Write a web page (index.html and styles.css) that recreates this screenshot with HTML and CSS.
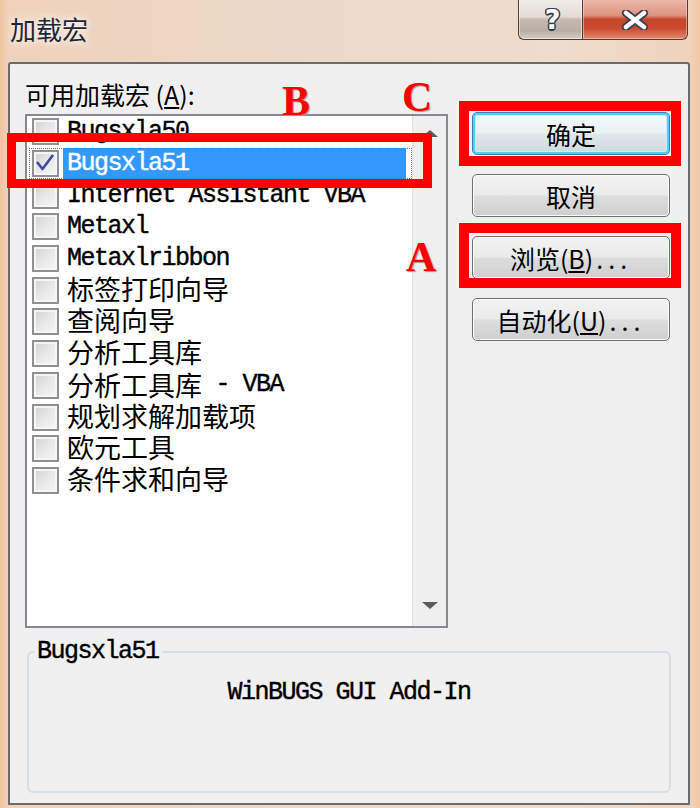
FILE: index.html
```html
<!DOCTYPE html>
<html lang="zh-CN">
<head>
    <meta charset="UTF-8">
    <meta name="viewport" content="width=device-width, initial-scale=1.0">
    <title>加载宏</title>
    <link rel="stylesheet" href="styles.css">
</head>
<body>
    <div class="window">
        <div class="titlebar">
            <span class="title">加载宏</span>
            <div class="caption">
                <div class="cap-btn help"><span class="help-glyph">?</span></div>
                <div class="cap-btn close">
                    <svg width="28" height="20" viewBox="0 0 28 20">
                        <path d="M5 3 L23 17 M23 3 L5 17" stroke="#3a3f52" stroke-width="8" stroke-linecap="round"/>
                        <path d="M5 3 L23 17 M23 3 L5 17" stroke="#ffffff" stroke-width="4.5" stroke-linecap="round"/>
                    </svg>
                </div>
            </div>
        </div>

        <div class="client">
            <div class="top">
                <div class="list-col">
                    <div class="list-label">可用加载宏 (<u>A</u>):</div>
                    <div class="listbox">
                        <div class="items">
                            <div class="item"><span class="box"></span><span class="name">Bugsxla50</span></div>
                            <div class="item selected">
                                <span class="box">
                                    <svg width="23" height="23" viewBox="0 0 23 23">
                                        <path d="M3 10 L8.5 17 L19 3" fill="none" stroke="#3d4c9e" stroke-width="2.6" stroke-linejoin="round"/>
                                    </svg>
                                </span>
                                <span class="name">Bugsxla51</span>
                            </div>
                            <div class="item"><span class="box"></span><span class="name">Internet Assistant VBA</span></div>
                            <div class="item"><span class="box"></span><span class="name">Metaxl</span></div>
                            <div class="item"><span class="box"></span><span class="name">Metaxlribbon</span></div>
                            <div class="item"><span class="box"></span><span class="name zh">标签打印向导</span></div>
                            <div class="item"><span class="box"></span><span class="name zh">查阅向导</span></div>
                            <div class="item"><span class="box"></span><span class="name zh">分析工具库</span></div>
                            <div class="item"><span class="box"></span><span class="name mixed"><span class="zh">分析工具库</span> - VBA</span></div>
                            <div class="item"><span class="box"></span><span class="name zh">规划求解加载项</span></div>
                            <div class="item"><span class="box"></span><span class="name zh">欧元工具</span></div>
                            <div class="item"><span class="box"></span><span class="name zh">条件求和向导</span></div>
                        </div>
                        <div class="scrollbar">
                            <span class="arrow up"></span>
                            <span class="arrow down"></span>
                        </div>
                    </div>
                </div>

                <div class="buttons">
                    <button class="default">确定</button>
                    <button>取消</button>
                    <button>浏览(<u>B</u>)<span class="dots">...</span></button>
                    <button>自动化(<u>U</u>)<span class="dots">...</span></button>
                </div>
            </div>

            <fieldset class="desc">
                <legend>Bugsxla51</legend>
                <p>WinBUGS GUI Add-In</p>
            </fieldset>
        </div>

        <!-- red annotation marks drawn over the dialog -->
        <div class="mark mark-b"></div>
        <div class="mark mark-c"></div>
        <div class="mark mark-a"></div>
        <span class="letter letter-b">B</span>
        <span class="letter letter-c">C</span>
        <span class="letter letter-a">A</span>
    </div>
</body>
</html>
```

FILE: styles.css
```css
* {
    box-sizing: border-box;
}

body {
    margin: 0;
    width: 700px;
    height: 808px;
    overflow: hidden;
    background-color: #ecd7c6;
    font-family: "Noto Sans CJK SC", sans-serif;
}

.window {
    position: relative;
    height: 808px;
    display: flex;
    flex-direction: column;
    background: linear-gradient(to right, #eec49f 0, #efd2bb 8px, #ecd8c8 40%, #efdccd 80%, #efd3bd 690px, #f3c7a3 700px);
}

/* title bar */
.titlebar {
    height: 62px;
    display: flex;
    justify-content: space-between;
    align-items: flex-start;
}

.title {
    padding: 13px 0 0 10px;
    font-size: 26px;
    line-height: 32px;
    color: #1c2738;
    text-shadow: 0 0 6px #fff6ee, 0 0 10px #fff6ee;
}

.caption {
    display: flex;
    margin: -2px 12px 0 0;
}

.cap-btn {
    height: 42px;
    display: flex;
    align-items: center;
    justify-content: center;
    border: 1.5px solid #4c3e36;
    border-top: none;
    padding-top: 2px;
}

.help {
    width: 64px;
    border-right: none;
    border-radius: 0 0 0 6px;
    background: linear-gradient(#f3eee9 0%, #e4ddd6 45%, #c6bab0 52%, #b9aea4 80%, #d6cdc5 100%);
    box-shadow: inset 0 0 0 1px rgba(255, 255, 255, 0.5);
}

.help-glyph {
    font: bold 27px/1 "DejaVu Sans", sans-serif;
    color: #ffffff;
    margin-left: 4px;
    text-shadow: 1.5px 0 0 #34415a, -1.5px 0 0 #34415a, 0 1.5px 0 #34415a, 0 -1.5px 0 #34415a,
                 1px 1px 0 #34415a, -1px -1px 0 #34415a, 1px -1px 0 #34415a, -1px 1px 0 #34415a;
}

.close {
    width: 106px;
    border-radius: 0 0 6px 0;
    background: linear-gradient(#ecbcae 0%, #df9480 42%, #c6452b 52%, #c94a30 74%, #e58b70 100%);
    box-shadow: inset 0 0 0 1px rgba(255, 220, 210, 0.5);
}

/* client area */
.client {
    flex: 1;
    margin: 0 10px 3px 8px;
    border: 2px solid #6b6b6b;
    border-radius: 3px 3px 0 0;
    background-color: #f0f0f0;
    padding: 15px 16px 0 15px;
    display: flex;
    flex-direction: column;
}

.top {
    display: flex;
    align-items: flex-start;
}

.list-col {
    width: 423px;
}

.list-label {
    height: 30px;
    margin-bottom: 5px;
    font-size: 25px;
    line-height: 30px;
    color: #000;
}

.list-label u,
button u {
    text-underline-offset: 2px;
}

.listbox {
    height: 514px;
    border: 2px solid #868a90;
    background-color: #fff;
    display: flex;
}

.items {
    flex: 1;
    padding-left: 5px;
}

.item {
    height: 31.7px;
    display: flex;
    align-items: center;
}

.item.selected {
    outline: 1px dotted #8a6a48;
    outline-offset: -1px;
    margin-left: -3px;
    padding-left: 3px;
}

.box {
    width: 27px;
    height: 27px;
    flex: none;
    border: 2px solid #8f9090;
    background: linear-gradient(135deg, #cfd0d2 0%, #e6e6e6 45%, #f7f7f7 100%);
    box-shadow: inset 0 0 0 2px #f6f6f6;
}

.name {
    flex: 1;
    height: 31px;
    margin: 0 6px 0 4px;
    padding-left: 4px;
    display: flex;
    align-items: center;
    font-family: "Liberation Mono", "Noto Sans CJK SC", monospace;
    font-size: 25px;
    line-height: 31px;
    letter-spacing: -1.5px;
    white-space: pre;
    color: #000;
    -webkit-text-stroke: 0.4px #000;
}

.zh {
    font-family: "Noto Sans CJK SC", sans-serif;
    font-size: 27px;
    line-height: 27px;
    letter-spacing: 0;
    -webkit-text-stroke: 0;
}

.name.zh {
    padding-bottom: 4px;
}

.name.mixed {
    padding-bottom: 2px;
}

.selected .name {
    background-color: #3399ff;
    color: #fff;
    -webkit-text-stroke: 0.4px #fff;
}

.scrollbar {
    width: 34px;
    flex: none;
    background-color: #efefef;
    border-left: 1px dotted #d2d2d2;
    display: flex;
    flex-direction: column;
    justify-content: space-between;
    align-items: center;
    padding: 14px 0 17px;
}

.arrow {
    width: 0;
    height: 0;
    border-left: 8px solid transparent;
    border-right: 8px solid transparent;
}

.arrow.up {
    border-bottom: 7px solid #5c5c5c;
}

.arrow.down {
    border-top: 7px solid #5c5c5c;
}

/* command buttons */
.buttons {
    width: 198px;
    margin: 33px 0 0 24px;
    display: flex;
    flex-direction: column;
    gap: 19px;
}

.buttons button {
    height: 43px;
    padding: 0;
    border: 1.5px solid #707070;
    border-radius: 5px;
    background: linear-gradient(#f3f3f3 0%, #ebebeb 48%, #dddddd 52%, #cfcfcf 100%);
    box-shadow: inset 0 0 0 1px #fbfbfb;
    font-family: "Noto Sans CJK SC", sans-serif;
    font-size: 25px;
    color: #000;
}

.buttons button.default {
    border-color: #3c7fb1;
    box-shadow: inset 0 0 0 2px #4bd3f7, inset 0 0 0 3px #c5f0fc;
    background: linear-gradient(#f4f9fb 0%, #eaf2f6 48%, #dde7ec 52%, #cfd9de 100%);
}

.dots {
    letter-spacing: 5px;
    margin-left: 3px;
}

/* description group */
.desc {
    height: 155px;
    margin: 10px 0 0 2px;
    width: 644px;
    padding: 0;
    border: 2px solid #d6dfe6;
    border-radius: 6px;
}

.desc legend,
.desc p {
    font-family: "Liberation Mono", monospace;
    font-size: 25px;
    line-height: 28px;
    letter-spacing: -1.5px;
    color: #000;
    -webkit-text-stroke: 0.4px #000;
}

.desc legend {
    margin-left: 5px;
    padding: 0 3px;
}

.desc p {
    margin: 13px 0 0;
    text-align: center;
}

/* annotations */
.mark {
    position: absolute;
    border: 10px solid #ff0000;
}

.mark-b {
    left: 7px;
    top: 133px;
    width: 425px;
    height: 55px;
    border-width: 9px;
}

.mark-c {
    left: 459px;
    top: 101px;
    width: 222px;
    height: 65px;
}

.mark-a {
    left: 459px;
    top: 223px;
    width: 222px;
    height: 65px;
}

.letter {
    position: absolute;
    font: bold 42px/1 "Liberation Serif", serif;
    color: #ff0000;
    text-shadow: 1px 1px 1px #9a9a9a;
}

.letter-b {
    left: 282px;
    top: 80px;
}

.letter-c {
    left: 402px;
    top: 76px;
}

.letter-a {
    left: 406px;
    top: 236px;
}
```
